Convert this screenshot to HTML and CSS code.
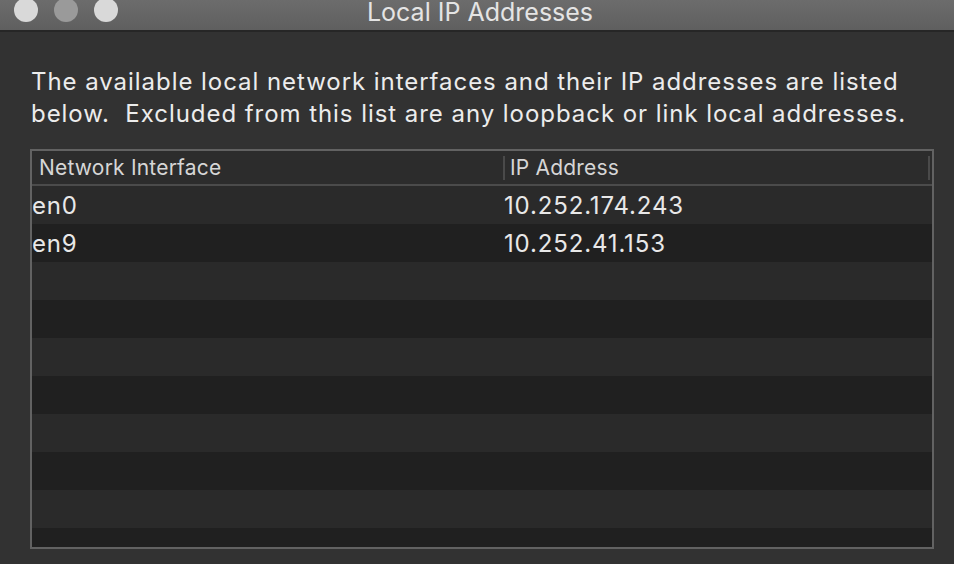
FILE: index.html
```html
<!DOCTYPE html>
<html>
<head>
    <link rel="stylesheet" href="styles.css">
    <title>Local IP Addresses</title>
</head>
<body>
    <div class="window">
        <div class="titlebar">
            <div class="lights">
                <span class="light"></span>
                <span class="light dim"></span>
                <span class="light"></span>
            </div>
            <div class="title">Local IP Addresses</div>
            <div></div>
        </div>

        <p class="intro">
            The available local network interfaces and their IP addresses are listed<br>
            below.&nbsp; Excluded from this list are any loopback or link local addresses.
        </p>

        <div class="list">
            <div class="list-head">
                <div class="col-iface">Network Interface</div>
                <div class="col-ip">IP Address</div>
                <div class="col-end"></div>
            </div>
            <div class="rows">
                <div class="row">
                    <div class="cell-iface">en0</div>
                    <div class="cell-ip">10.252.174.243</div>
                </div>
                <div class="row">
                    <div class="cell-iface">en9</div>
                    <div class="cell-ip">10.252.41.153</div>
                </div>
                <div class="row"></div>
                <div class="row"></div>
                <div class="row"></div>
                <div class="row"></div>
                <div class="row"></div>
                <div class="row"></div>
                <div class="row"></div>
                <div class="row"></div>
            </div>
        </div>
    </div>
</body>
</html>
```

FILE: styles.css
```css
* {
    box-sizing: border-box;
}

body {
    margin: 0;
    background-color: #323232;
    font-family: Inter, "Noto Sans", sans-serif;
    color: #e2e2e2;
    overflow: hidden;
}

.window {
    width: 954px;
    height: 564px;
    display: flex;
    flex-direction: column;
}

/* title bar */
.titlebar {
    height: 32px;
    flex: none;
    display: grid;
    grid-template-columns: 1fr auto 1fr;
    background: linear-gradient(#6c6c6c, #5f5f5f);
    border-bottom: 2px solid #262626;
}

.lights {
    display: flex;
    gap: 16px;
    padding-left: 14px;
    margin-top: -2px;
}

.light {
    width: 24px;
    height: 24px;
    border-radius: 50%;
    background-color: #d9d9d9;
}

.light.dim {
    background-color: #9a9a9a;
}

.title {
    font-size: 25px;
    line-height: 24px;
    color: #e4e4e4;
    padding-left: 6px;
}

/* description */
.intro {
    margin: 34px 0 0 31px;
    font-size: 24px;
    line-height: 32px;
    letter-spacing: 0.95px;
    color: #ececec;
}

/* list */
.list {
    margin: 19px 20px 0 30px;
    height: 400px;
    border: 2px solid #626262;
    display: flex;
    flex-direction: column;
    background-color: #202020;
    overflow: hidden;
}

.list-head {
    display: flex;
    height: 35px;
    flex: none;
    align-items: center;
    background-color: #2c2c2c;
    border-bottom: 2px solid #4b4b4b;
    font-size: 21px;
    letter-spacing: 0.2px;
    color: #d6d6d6;
}

.col-iface {
    width: 471px;
    padding-left: 7px;
}

.col-ip {
    flex: 1;
    padding-left: 5px;
    border-left: 2px solid #4a4a4a;
    line-height: 24px;
}

.col-end {
    width: 2px;
    height: 24px;
    margin-right: 2px;
    background-color: #4a4a4a;
}

.row {
    display: flex;
    height: 38px;
    align-items: center;
    font-size: 24px;
    letter-spacing: 0.85px;
    color: #e8e8e8;
}

.row:nth-child(odd) {
    background-color: #2a2a2a;
}

.row:nth-child(even) {
    background-color: #202020;
}

.cell-iface {
    width: 472px;
}

.cell-ip {
    flex: 1;
}
```
